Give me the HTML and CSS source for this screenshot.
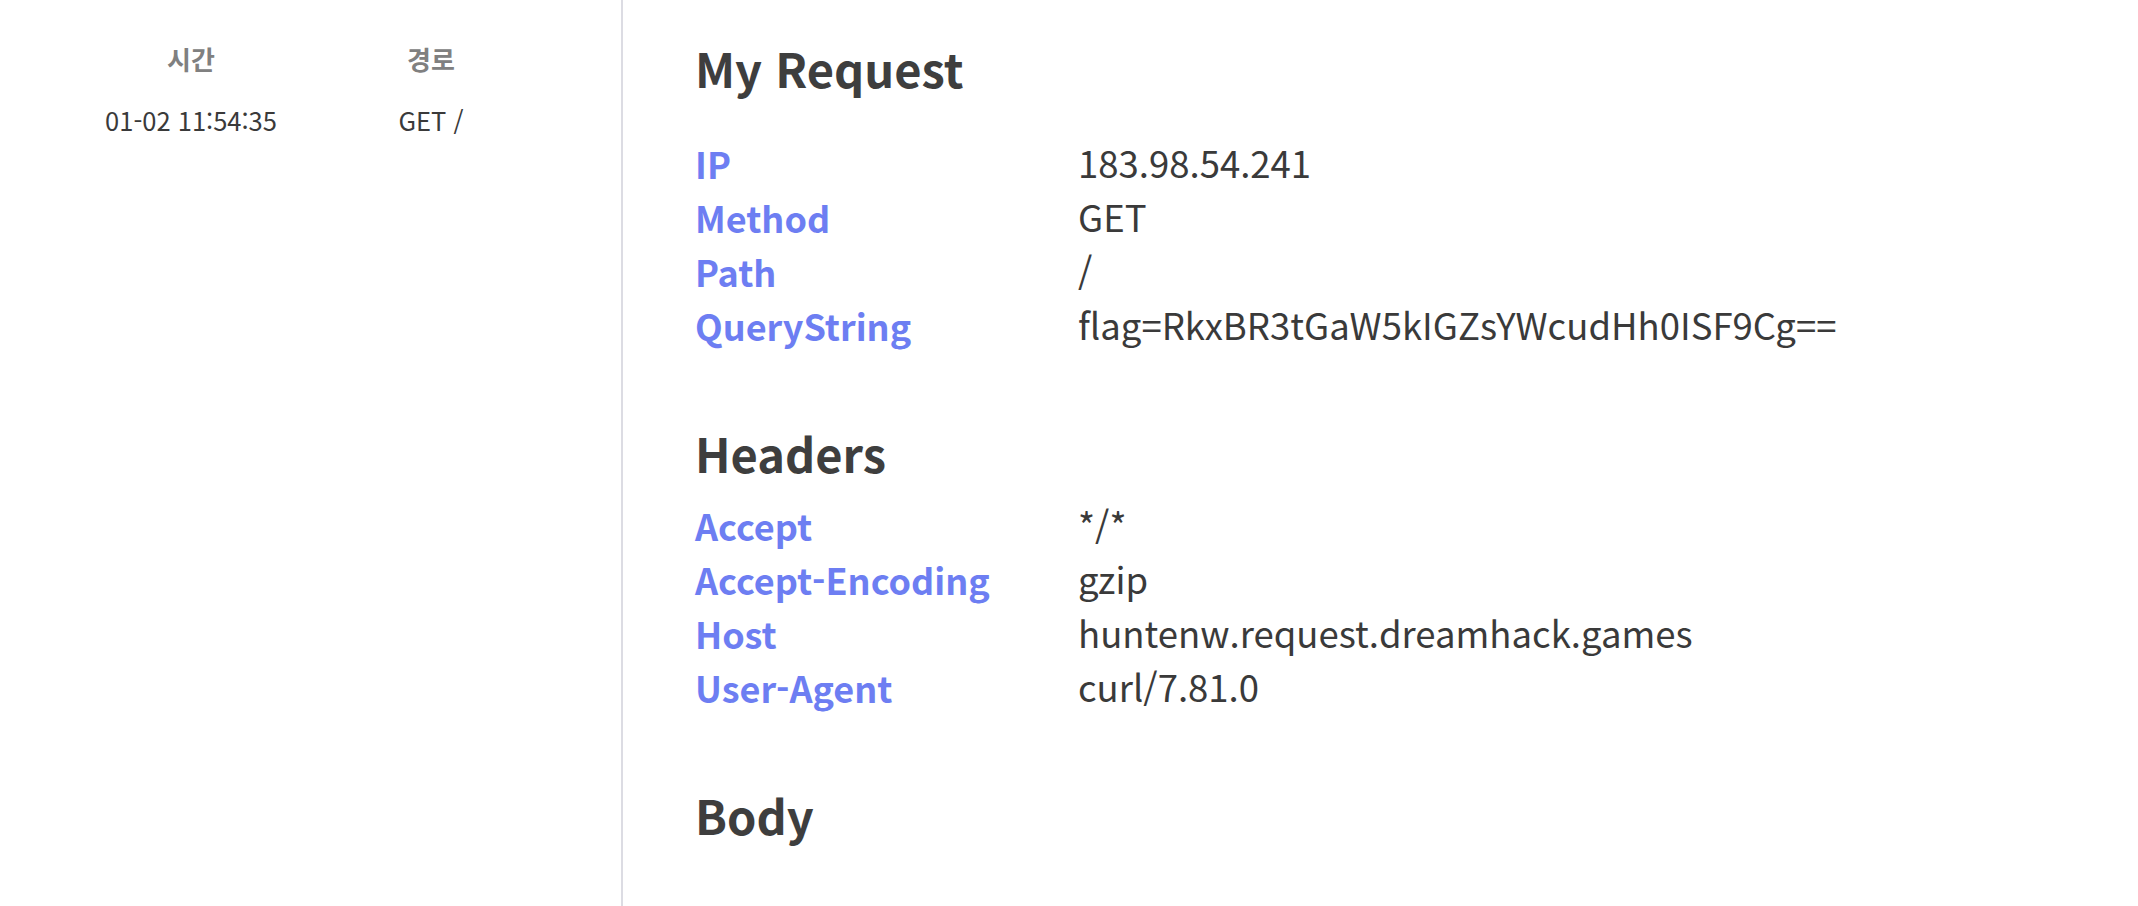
FILE: index.html
```html
<!DOCTYPE html>
<html lang="ko">
<head>
<meta charset="utf-8">
<title>Request Bin</title>
<link rel="stylesheet" href="styles.css">
</head>
<body>
<div class="layout">
  <aside class="sidebar">
    <table class="log-table">
      <thead>
        <tr><th>시간</th><th>경로</th></tr>
      </thead>
      <tbody>
        <tr><td>01-02 11:54:35</td><td>GET /</td></tr>
      </tbody>
    </table>
  </aside>
  <main class="detail">
    <section class="section">
      <h2 class="section-title">My Request</h2>
      <div class="kv kv-first">
        <div class="kv-row"><span class="kv-key">IP</span><span class="kv-val">183.98.54.241</span></div>
        <div class="kv-row"><span class="kv-key">Method</span><span class="kv-val">GET</span></div>
        <div class="kv-row"><span class="kv-key">Path</span><span class="kv-val">/</span></div>
        <div class="kv-row"><span class="kv-key">QueryString</span><span class="kv-val">flag=RkxBR3tGaW5kIGZsYWcudHh0ISF9Cg==</span></div>
      </div>
    </section>
    <section class="section">
      <h2 class="section-title">Headers</h2>
      <div class="kv">
        <div class="kv-row"><span class="kv-key">Accept</span><span class="kv-val">*/*</span></div>
        <div class="kv-row"><span class="kv-key">Accept-Encoding</span><span class="kv-val">gzip</span></div>
        <div class="kv-row"><span class="kv-key">Host</span><span class="kv-val">huntenw.request.dreamhack.games</span></div>
        <div class="kv-row"><span class="kv-key">User-Agent</span><span class="kv-val">curl/7.81.0</span></div>
      </div>
    </section>
    <section class="section">
      <h2 class="section-title">Body</h2>
    </section>
  </main>
</div>
</body>
</html>
```

FILE: styles.css
```css
* { box-sizing: border-box; }

html, body {
  margin: 0;
  padding: 0;
  background: #ffffff;
  font-family: "Noto Sans CJK KR", "Noto Sans", sans-serif;
  color: #3a3a3a;
}

.layout {
  display: flex;
  height: 906px;
  overflow: hidden;
}

.sidebar {
  width: 623px;
  flex: 0 0 623px;
  border-right: 2px solid #dcdce3;
  border-top-left-radius: 14px;
  padding: 43px 70px 0 71px;
  background: #ffffff;
}

.log-table {
  width: 480px;
  border-collapse: collapse;
  table-layout: fixed;
}

.log-table th,
.log-table td {
  width: 240px;
  text-align: center;
  padding: 0;
}

.log-table th {
  font-size: 26px;
  font-weight: 700;
  color: #808080;
  line-height: 32px;
  padding-bottom: 29px;
}

.log-table td {
  font-size: 25.5px;
  font-weight: 400;
  color: #3a3a3a;
  line-height: 32px;
}

.detail {
  flex: 1;
  padding: 39px 0 0 72px;
}

.section {
  margin-bottom: 72px;
}

.section-title {
  margin: 0;
  font-size: 47px;
  line-height: 58px;
  font-weight: 700;
  color: #3e3e3e;
}

.kv {
  margin-top: 16px;
  display: flex;
  flex-direction: column;
}

.kv-first {
  margin-top: 39px;
}

.kv-row {
  display: flex;
  font-size: 36.5px;
  line-height: 54px;
}

.kv-key {
  width: 383px;
  flex: 0 0 383px;
  font-weight: 700;
  font-size: 36px;
  color: #6d7ef2;
}

.kv-val {
  font-weight: 400;
  color: #3a3a3a;
}
```
